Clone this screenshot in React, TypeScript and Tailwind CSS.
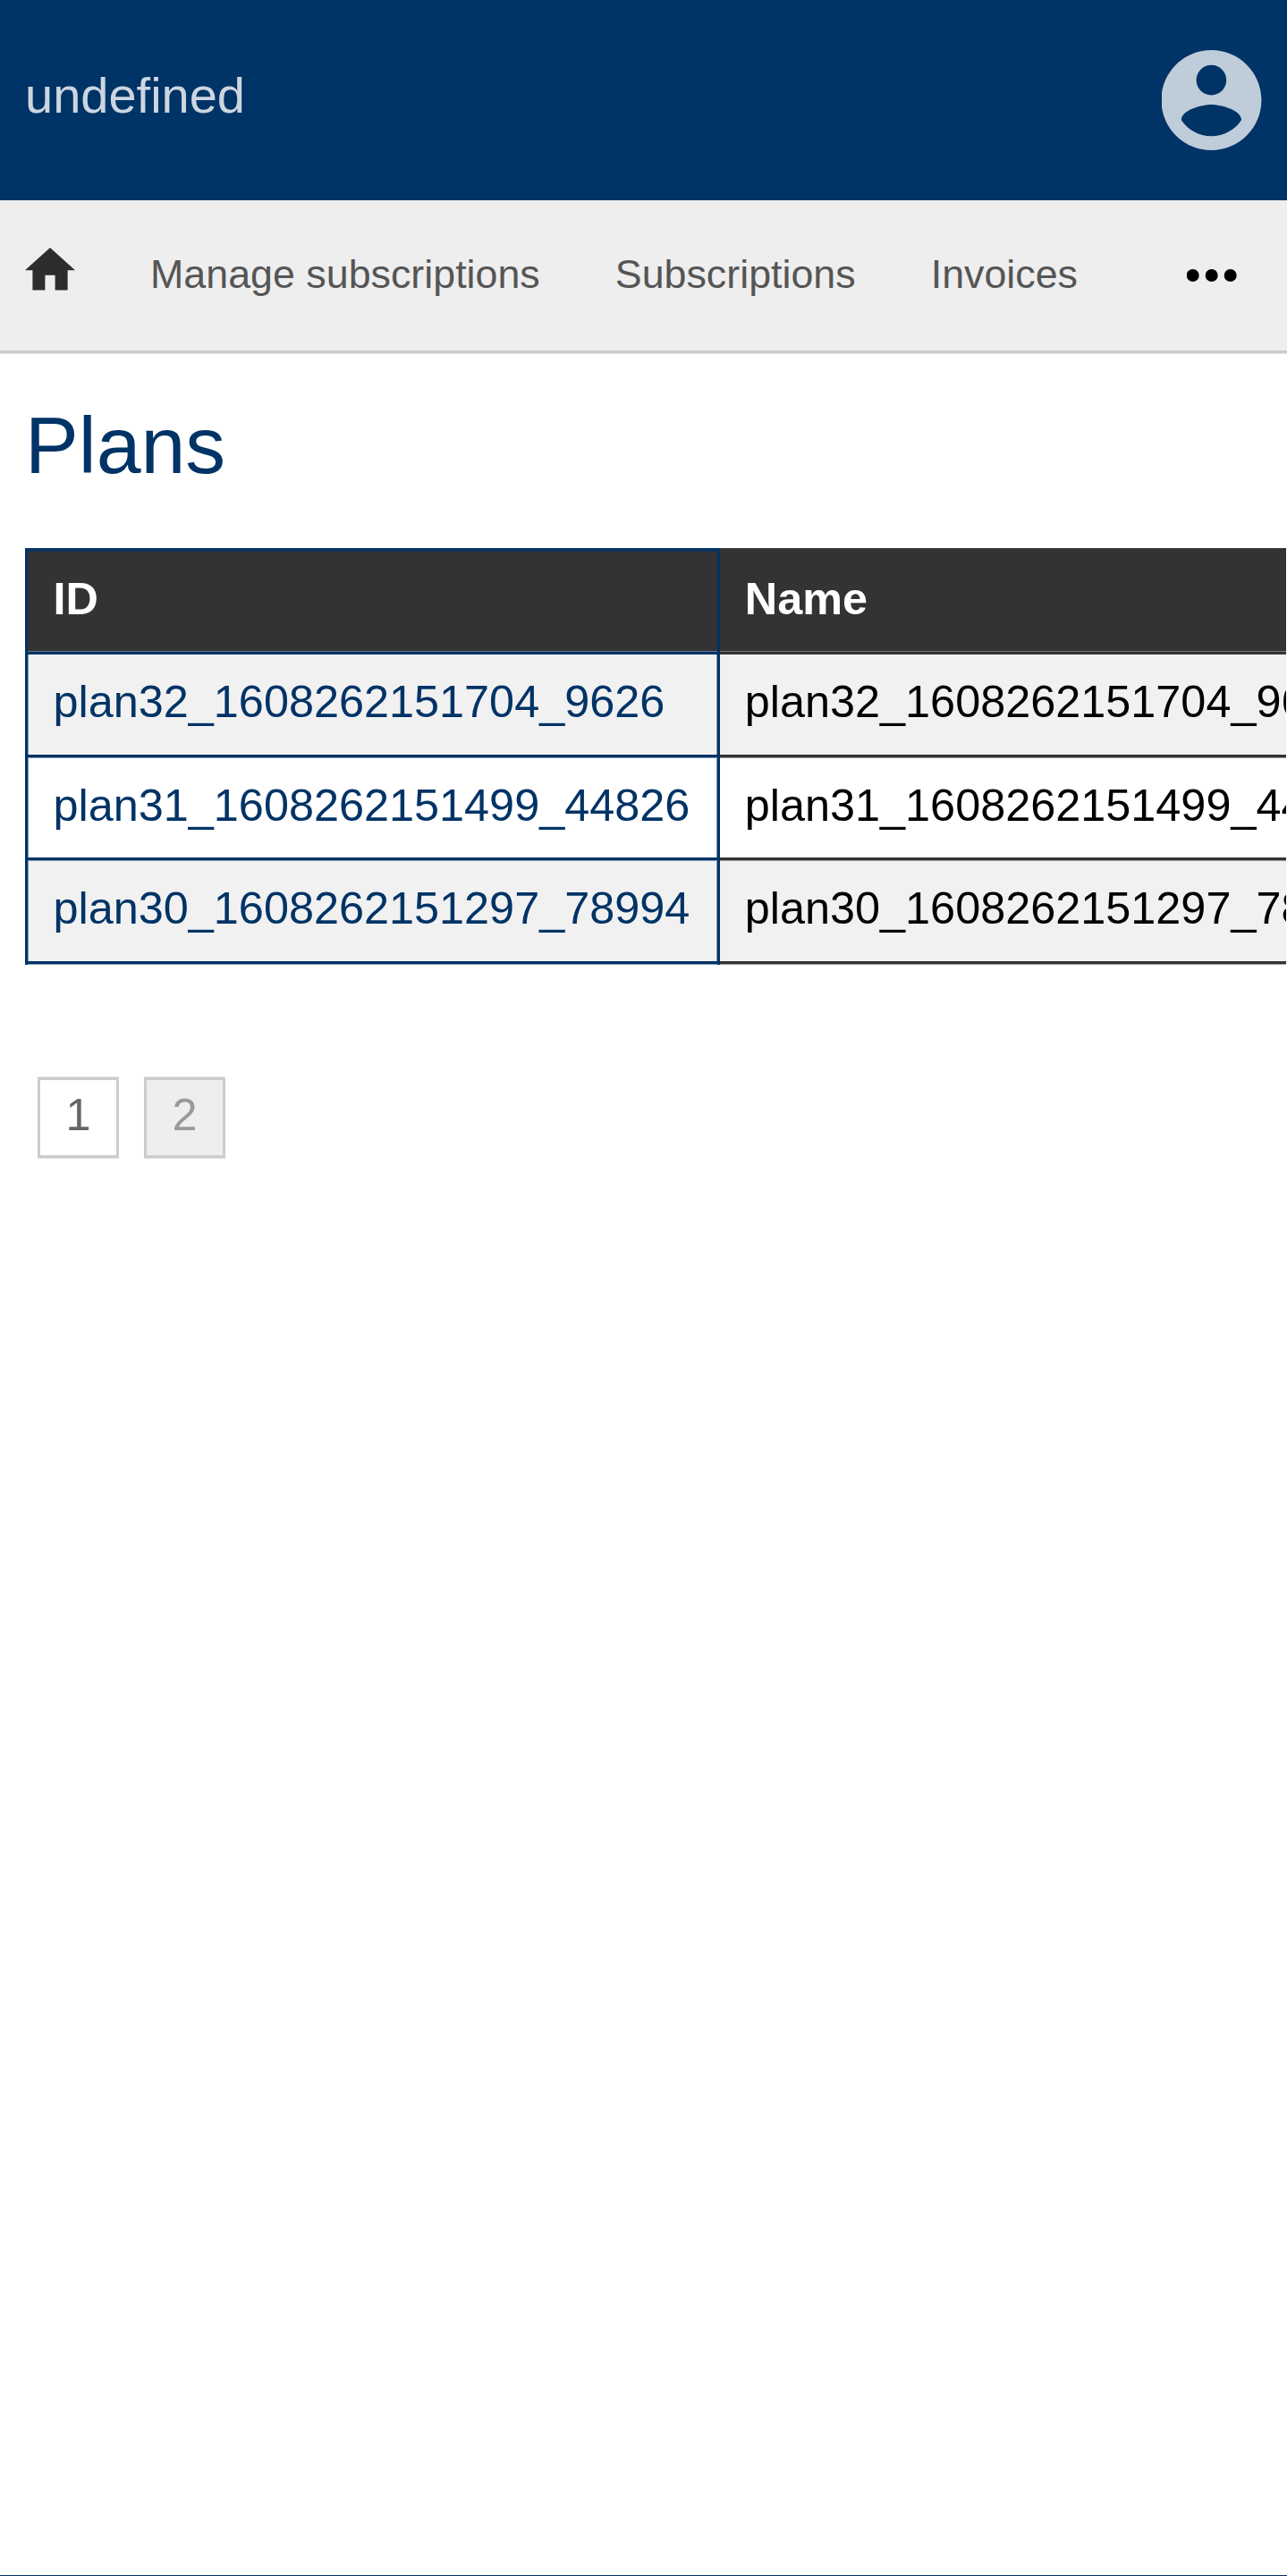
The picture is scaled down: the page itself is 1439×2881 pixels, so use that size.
const rows = [
  { id: "plan32_1608262151704_9626", shaded: true },
  { id: "plan31_1608262151499_44826", shaded: false },
  { id: "plan30_1608262151297_78994", shaded: true },
];

function Header() {
  return (
    <header className="flex h-[224px] items-center justify-between bg-[#003366] px-[28px]">
      <div className="mt-[-10px] text-[56px] leading-[64px] text-[#ccd6e0]">undefined</div>
      <svg viewBox="2.1 2 20 20" className="h-[112px] w-[112px] fill-[#bfccd9]">
        <path d="M12 2C6.48 2 2 6.48 2 12s4.48 10 10 10 10-4.48 10-10S17.52 2 12 2zm0 3c1.66 0 3 1.34 3 3s-1.34 3-3 3-3-1.34-3-3 1.34-3 3-3zm0 14.2c-2.5 0-4.71-1.28-6-3.22.03-1.99 4-3.08 6-3.08 1.99 0 5.97 1.09 6 3.08-1.29 1.94-3.5 3.22-6 3.22z" />
      </svg>
    </header>
  );
}

function Nav() {
  return (
    <nav className="border-b border-[#e5e5e5]">
      <div className="flex h-[171px] items-start border-b-[3px] border-[#cccccc] bg-[#eeeeee] pl-[28px] text-[44.8px] leading-[52px] text-[#555555]">
        <svg viewBox="2 3 20 17" className="mt-[53px] h-[47.6px] w-[56px] fill-[#2d2d2d]">
          <path d="M10 20v-6h4v6h5v-8h3L12 3 2 12h3v8z" />
        </svg>
        <span className="mt-[56px] ml-[84px]">Manage subscriptions</span>
        <span className="mt-[56px] ml-[84px]">Subscriptions</span>
        <span className="mt-[56px] ml-[84px]">Invoices</span>
        <svg viewBox="0 0 56 14" className="mt-[77px] mr-[56px] ml-auto h-[14px] w-[56px] fill-black">
          <circle cx="6.7" cy="7" r="7" />
          <circle cx="27.7" cy="7" r="7" />
          <circle cx="48.7" cy="7" r="7" />
        </svg>
      </div>
    </nav>
  );
}

function IdColumn() {
  return (
    <div className="w-[777px] shrink-0 border-x-[3px] border-t-[3px] border-[#003366] text-[#003366]">
      <div className="h-px bg-[#1a334d]" />
      <div className="h-[111px] bg-[#333333] pt-[24px] pl-[28.5px] font-bold text-white">ID</div>
      <div className="h-px bg-[#66778a]" />
      <div className="h-[3px] bg-[#003366]" />
      {rows.map((row, i) => (
        <div key={row.id}>
          {i === 2 && <div className="h-px bg-[#7f99b2]" />}
          <div
            className={`border-x border-[#7f99b2] pt-[24px] pl-[27.5px] ${i === 1 ? "h-[111px]" : "h-[112px]"} ${row.shaded ? "bg-[#f1f1f1]" : "bg-white"}`}
          >
            {row.id}
          </div>
          <div className="h-[3px] bg-[#003366]" />
          {i !== 1 && <div className="h-px bg-[#7f99b2]" />}
        </div>
      ))}
    </div>
  );
}

function NameColumn() {
  return (
    <div className="w-[792px] shrink-0 text-black">
      <div className="h-[115px] bg-[#333333] pt-[28px] pl-[27.75px] font-bold text-white">Name</div>
      <div className="h-px bg-[#777777]" />
      <div className="h-[3px] bg-[#333333]" />
      {rows.map((row, i) => (
        <div key={row.id}>
          {i === 2 && <div className="h-px bg-[#999999]" />}
          <div
            className={`pt-[24px] pl-[27.75px] ${i === 1 ? "h-[111px]" : "h-[112px]"} ${row.shaded ? "bg-[#f1f1f1]" : "bg-white"}`}
          >
            {row.id}
          </div>
          <div className="h-[3px] bg-[#333333]" />
          {i !== 1 && <div className="h-px bg-[#999999]" />}
        </div>
      ))}
    </div>
  );
}

export default function App() {
  return (
    <div className="flex h-[2881px] w-[1439px] flex-col overflow-hidden bg-white font-['Liberation_Sans',Arial,sans-serif]">
      <Header />
      <Nav />
      <main className="grow px-[28px]">
        <h1 className="pt-[50px] text-[89.6px] leading-[104px] text-[#003366]">Plans</h1>
        <div className="mt-[63px] flex w-[1410px] overflow-hidden text-[50.4px] leading-[58px]">
          <IdColumn />
          <NameColumn />
        </div>
        <div className="mt-[125px] ml-[14px] flex gap-[28px] text-[50.4px] leading-[58px]">
          <div className="h-[92px] w-[91px] border-y border-[#e0e0e0]">
            <div className="h-[90px] border-[3px] border-[#cccccc] pt-[10px] text-center text-[#666666]">1</div>
          </div>
          <div className="h-[92px] w-[91px] border-y border-[#e0e0e0]">
            <div className="h-[90px] border-[3px] border-[#cccccc] bg-[#eeeeee] pt-[10px] text-center text-[#999999]">2</div>
          </div>
        </div>
      </main>
      <div className="h-px shrink-0 bg-[#003366]" />
    </div>
  );
}
